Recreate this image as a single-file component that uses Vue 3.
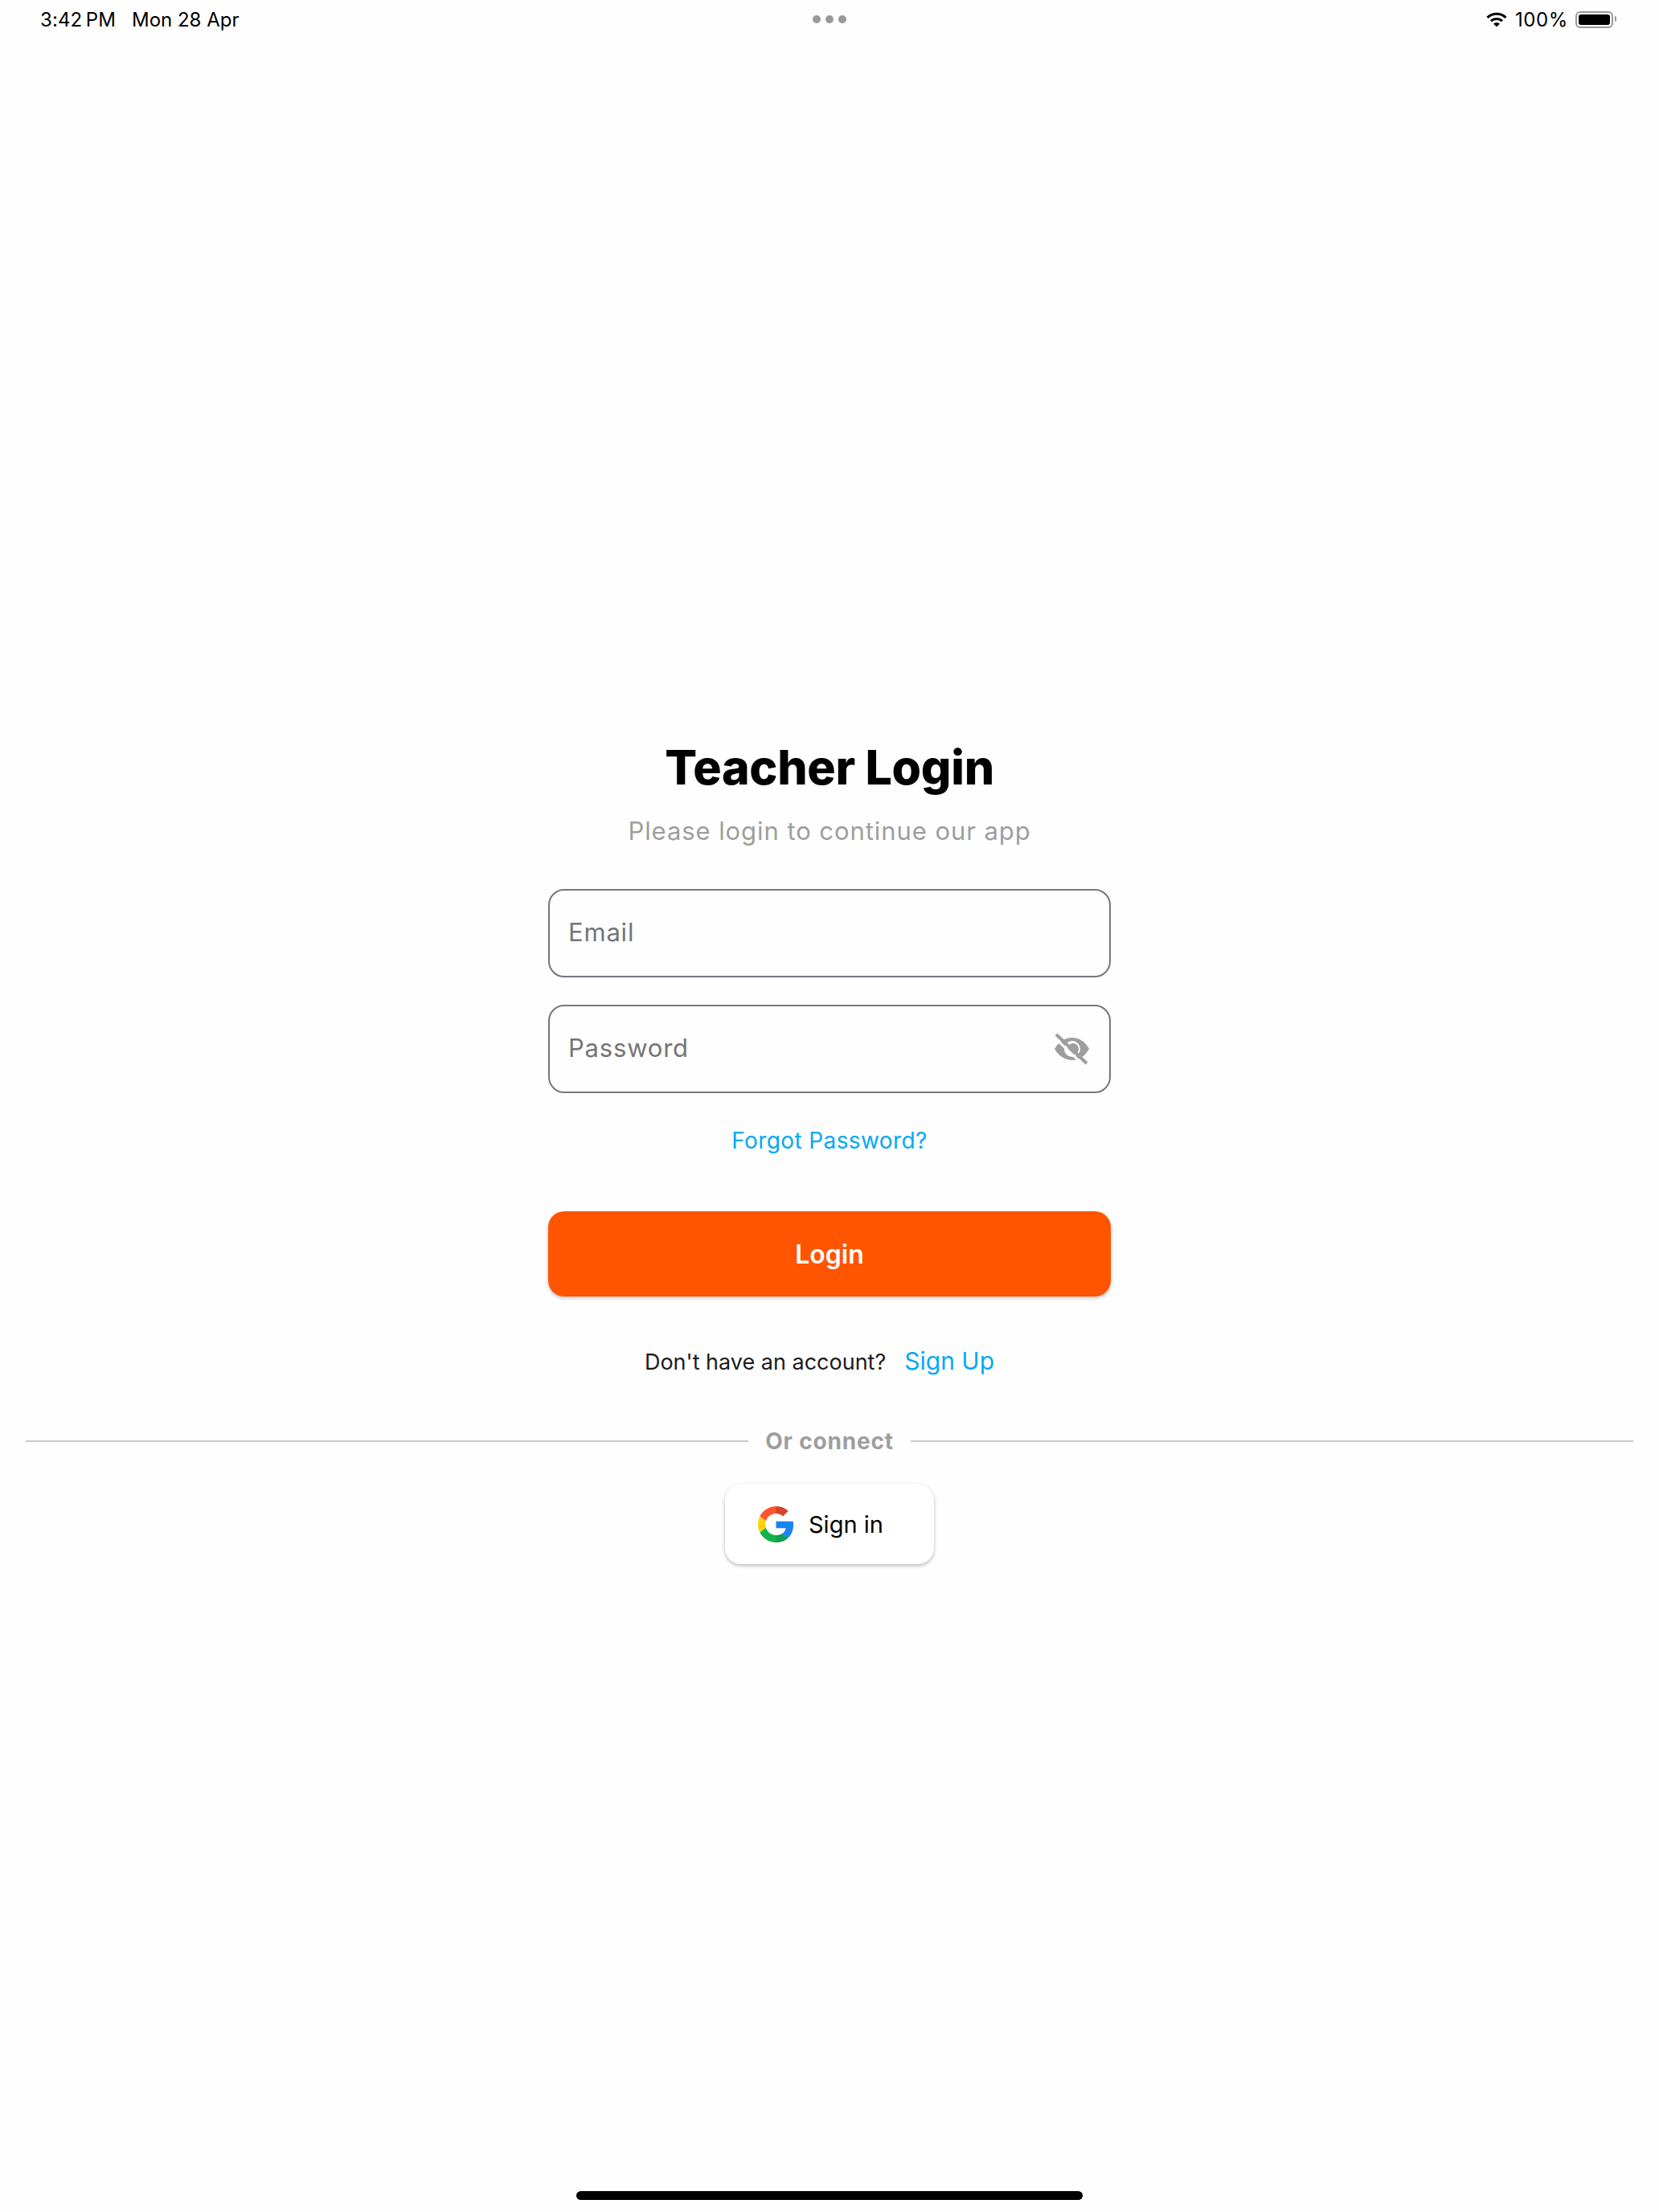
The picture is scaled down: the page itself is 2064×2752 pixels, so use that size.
<script setup>
const googleRed = 'M24 9.5c3.54 0 6.71 1.22 9.21 3.6l6.85-6.85C35.9 2.38 30.47 0 24 0 14.62 0 6.51 5.38 2.56 13.22l7.98 6.19C12.43 13.72 17.74 9.5 24 9.5z'
const googleGreen = 'M24 48c6.48 0 11.93-2.13 15.89-5.81l-7.73-6c-2.15 1.45-4.92 2.3-8.16 2.3-6.26 0-11.57-4.22-13.47-9.91l-7.98 6.19C6.51 42.62 14.62 48 24 48z'
</script>

<template>
  <div class="screen">
    <div class="status-bar">
      <div class="status-left">
        <span class="clock">3:42&#8201;PM</span>
        <span>Mon 28 Apr</span>
      </div>
      <div class="dots"><i></i><i></i><i></i></div>
      <div class="status-right">
        <svg class="wifi" viewBox="0 0 28 20" width="28" height="20">
          <path d="M2.500 7.800A16.500 16.500 0 0 1 25.500 7.800" fill="none" stroke="#000" stroke-width="3" />
          <path d="M7 12.300A10 10 0 0 1 21 12.300" fill="none" stroke="#000" stroke-width="3" />
          <path d="M14 19.500 10 15.500A6 6 0 0 1 18 15.500Z" />
        </svg>
        <span class="percent">100%</span>
        <div class="battery"><div class="battery-fill"></div></div>
      </div>
    </div>

    <main class="login">
      <h1>Teacher Login</h1>
      <p class="subtitle">Please login to continue our app</p>

      <div class="form">
        <div class="field"><span>Email</span></div>
        <div class="field">
          <span>Password</span>
          <svg class="eye" viewBox="0 0 48 48" width="48" height="48">
            <path fill="#9e9e9e" d="M2 24C7 15 15 10 24 10S40 15 45 24C40 33 32 38 24 38S7 33 2 24Z" />
            <circle cx="24" cy="24" r="10" fill="#fff" />
            <circle cx="25" cy="24" r="7" fill="#9e9e9e" />
            <path d="M1 9 39 45" stroke="#fff" stroke-width="3" />
            <path d="M4 6 42 42" stroke="#9e9e9e" stroke-width="4" />
          </svg>
        </div>
        <a class="forgot">Forgot Password?</a>
        <button class="login-btn">Login</button>
      </div>

      <div class="signup">
        <span>Don't have an account?</span>
        <a>Sign Up</a>
      </div>

      <div class="divider">
        <span class="line"></span>
        <span class="divider-text">Or connect</span>
        <span class="line"></span>
      </div>

      <button class="google-btn">
        <svg viewBox="0 0 48 48" width="45" height="45">
          <defs>
            <clipPath id="right-half"><rect x="24" y="0" width="24" height="48" /></clipPath>
          </defs>
          <path fill="#ff5530" :d="googleRed" />
          <path fill="#d2452a" :d="googleRed" clip-path="url(#right-half)" />
          <path fill="#ffd400" d="M10.530 28.590c-.480-1.450-.760-2.990-.760-4.590s.270-3.140.760-4.590l-7.980-6.190C.920 16.460 0 20.120 0 24c0 3.880.920 7.540 2.560 10.780l7.970-6.190z" />
          <path fill="#12b347" :d="googleGreen" />
          <path fill="#0f9d58" :d="googleGreen" clip-path="url(#right-half)" />
          <path fill="#1a84f0" d="M46.980 24.550c0-1.570-.150-3.090-.380-4.550H24v9.020h12.940c-.580 2.960-2.260 5.480-4.780 7.180l7.730 6c4.510-4.180 7.090-10.360 7.090-17.650z" />
        </svg>
        <span>Sign in</span>
      </button>
    </main>

    <div class="home-bar"></div>
  </div>
</template>

<style>
html, body {
  margin: 0;
  background: #fff;
}
</style>

<style scoped>
.screen {
  width: 2064px;
  height: 2752px;
  display: flex;
  flex-direction: column;
  background: #fffefe;
  font-family: Inter, "Liberation Sans", sans-serif;
  overflow: hidden;
}
.status-bar {
  height: 48px;
  flex: none;
  display: grid;
  grid-template-columns: 1fr auto 1fr;
  align-items: center;
  padding: 0 50px;
  font-size: 24px;
  color: #000;
}
.status-left {
  display: flex;
  gap: 20px;
}
.clock {
  letter-spacing: 0.1px;
}
.dots {
  display: flex;
  gap: 6px;
}
.dots i {
  width: 10px;
  height: 10px;
  border-radius: 50%;
  background: #999;
}
.status-right {
  display: flex;
  justify-content: flex-end;
  align-items: center;
  gap: 9px;
}
.percent {
  letter-spacing: 0.6px;
}
.battery {
  width: 47px;
  height: 21px;
  margin-right: 7px;
  padding: 2px;
  box-sizing: border-box;
  border: 2px solid #999;
  border-radius: 6px;
  position: relative;
}
.battery::after {
  content: "";
  position: absolute;
  right: -6px;
  top: 4px;
  width: 2px;
  height: 7px;
  background: #999;
  border-radius: 0 2px 2px 0;
}
.battery-fill {
  height: 100%;
  background: #000;
  border-radius: 3px;
}
.login {
  flex: 1;
  display: flex;
  flex-direction: column;
  align-items: center;
  padding: 872px 12px 0;
}
h1 {
  margin: 0;
  font-size: 59px;
  line-height: 70px;
  font-weight: 800;
  color: #000;
  letter-spacing: -0.3px;
}
.subtitle {
  margin: 24px 0 0;
  font-size: 31px;
  line-height: 40px;
  color: #9e9e9e;
  letter-spacing: 0.93px;
}
.form {
  width: 700px;
  margin-top: 52px;
  display: flex;
  flex-direction: column;
}
.field {
  height: 110px;
  box-sizing: border-box;
  border: 2px solid #79747e;
  border-radius: 20px;
  padding: 0 24px 0 23px;
  margin-bottom: 34px;
  display: flex;
  align-items: center;
  justify-content: space-between;
  font-size: 31px;
  color: #757575;
  letter-spacing: 0.8px;
}
.field span {
  margin-top: -3px;
}
.eye {
  margin-right: -2px;
}
.forgot {
  align-self: center;
  margin-top: 7px;
  font-size: 28px;
  line-height: 36px;
  color: #03a9f4;
  letter-spacing: 0.4px;
}
.login-btn {
  margin-top: 70px;
  height: 106px;
  border: 0;
  border-radius: 20px;
  background: #ff5500;
  color: #fff;
  font: 600 32px Inter, "Liberation Sans", sans-serif;
  box-shadow: 0 2px 4px rgba(0, 0, 0, 0.25);
}
.signup {
  margin-top: 58px;
  height: 44px;
  padding-right: 25px;
  display: flex;
  align-items: center;
  gap: 23px;
  font-size: 27px;
  line-height: 40px;
  color: #1c1c1c;
}
.signup span {
  margin-top: 3px;
}
.signup a {
  font-size: 30px;
  color: #03a9f4;
}
.divider {
  align-self: stretch;
  margin-top: 60px;
  padding: 0 20px;
  display: flex;
  align-items: center;
  gap: 21px;
}
.line {
  flex: 1;
  height: 2px;
  background: #cac4d0;
}
.divider-text {
  font-size: 28px;
  line-height: 36px;
  font-weight: 700;
  color: #9e9e9e;
  letter-spacing: 0.8px;
}
.google-btn {
  margin-top: 35px;
  width: 260px;
  height: 100px;
  border: 0;
  border-radius: 20px;
  background: #fff;
  display: flex;
  align-items: center;
  gap: 18px;
  padding: 0 0 0 41px;
  box-sizing: border-box;
  color: #000;
  font: 400 29px Inter, "Liberation Sans", sans-serif;
  box-shadow: 0 2px 4px rgba(0, 0, 0, 0.28);
}
.home-bar {
  flex: none;
  align-self: center;
  width: 630px;
  height: 11px;
  margin-bottom: 15px;
  border-radius: 6px;
  background: #000;
}
</style>
